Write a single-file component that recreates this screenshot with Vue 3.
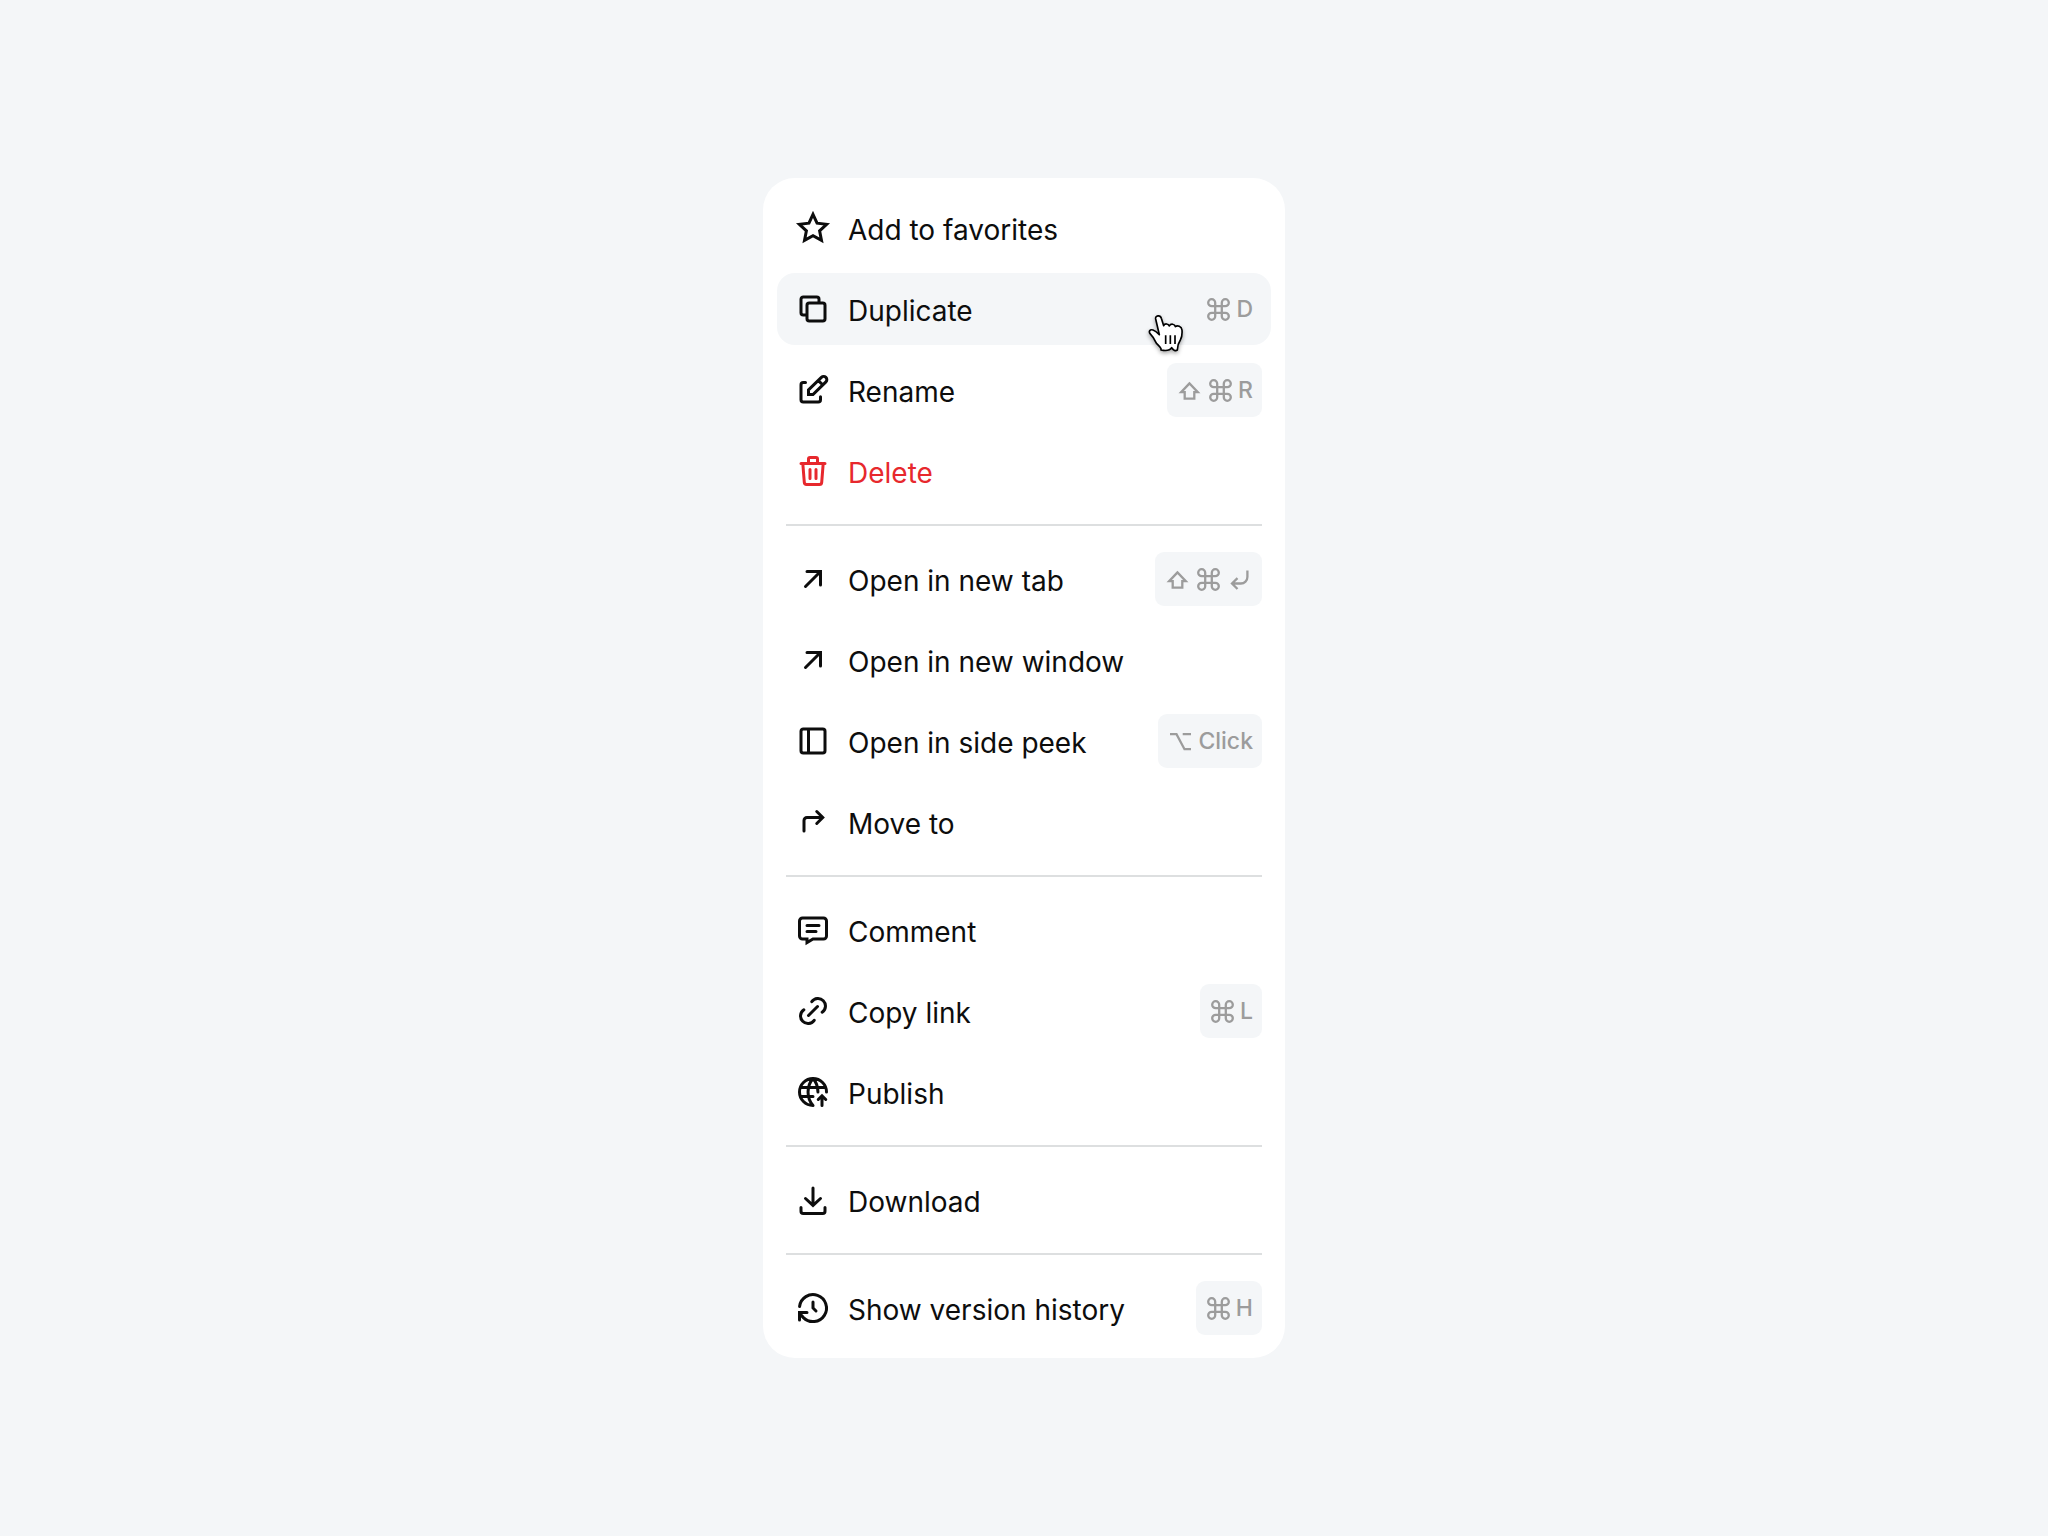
<template>
  <main class="page">
    <nav class="menu" aria-label="Page actions">
      <ul v-for="(group, index) in groups" :key="index" class="menu-group">
        <li v-for="item in group" :key="item.label" class="menu-row">
          <button
            type="button"
            class="menu-item"
            :class="{ danger: item.danger, active: item.label === activeItem }"
          >
            <svg class="item-icon" viewBox="0 0 24 24" aria-hidden="true">
              <path :d="icons[item.icon]" />
            </svg>
            <span class="item-label">{{ item.label }}</span>
            <kbd v-if="item.keys" class="shortcut">
              <template v-for="key in item.keys" :key="key">
                <svg v-if="keyIcons[key]" class="key-icon" viewBox="0 0 27 27" aria-hidden="true">
                  <path :d="keyIcons[key]" />
                </svg>
                <span v-else>{{ key }}</span>
              </template>
            </kbd>
          </button>

          <svg v-if="item.label === activeItem" class="pointer" viewBox="0 0 120 120" aria-hidden="true">
            <path
              class="hand"
              d="M26 15C24 4 40 2 43 13L50 35C53 28 64 28 67 36C71 28 83 29 85 38C91 33 104 37 105 48C106 62 105 70 100 78C94 87 91 94 91 108Q83 114 74 101Q67 113 42 108V104C37 95 29 91 25 82C21 73 17 67 11 61C3 53 9 45 18 48C26 51 31 56 37 62Z"
            />
            <path class="creases" d="M56 64V90M70 64V90M84 64V90" />
          </svg>
        </li>
      </ul>
    </nav>
  </main>
</template>

<script setup>
import { ref } from 'vue'

const activeItem = ref('Duplicate')

const groups = [
  [
    { label: 'Add to favorites', icon: 'star' },
    { label: 'Duplicate', icon: 'duplicate', keys: ['cmd', 'D'] },
    { label: 'Rename', icon: 'edit', keys: ['shift', 'cmd', 'R'] },
    { label: 'Delete', icon: 'trash', danger: true }
  ],
  [
    { label: 'Open in new tab', icon: 'arrow', keys: ['shift', 'cmd', 'enter'] },
    { label: 'Open in new window', icon: 'arrow' },
    { label: 'Open in side peek', icon: 'panel', keys: ['option', 'Click'] },
    { label: 'Move to', icon: 'move' }
  ],
  [
    { label: 'Comment', icon: 'comment' },
    { label: 'Copy link', icon: 'link', keys: ['cmd', 'L'] },
    { label: 'Publish', icon: 'publish' }
  ],
  [{ label: 'Download', icon: 'download' }],
  [{ label: 'Show version history', icon: 'history', keys: ['cmd', 'H'] }]
]

const icons = {
  star: 'M12 2.9L14.7 8.77L21.1 9.53L16.4 13.93L17.65 20.28L12 17.1L6.35 20.28L7.6 13.93L2.9 9.53L9.3 8.77Z',
  duplicate:
    'M9.5 8H18.5A1.5 1.5 0 0 1 20 9.5V18.5A1.5 1.5 0 0 1 18.5 20H9.5A1.5 1.5 0 0 1 8 18.5V9.5A1.5 1.5 0 0 1 9.5 8ZM8 16H5.5A1.5 1.5 0 0 1 4 14.5V5.5A1.5 1.5 0 0 1 5.5 4H14.5A1.5 1.5 0 0 1 16 5.5V8',
  edit: 'M7 7H5.5A1.5 1.5 0 0 0 4 8.5V18.5A1.5 1.5 0 0 0 5.5 20H15.5A1.5 1.5 0 0 0 17 18.5V16.5M9 15V12L17.6 3.6A2.1 2.1 0 0 1 20.6 6.6L12 15ZM15.6 5.8L18.4 8.5',
  trash:
    'M4 7H20M5.2 7L6.2 19.6A1.5 1.5 0 0 0 7.7 21H16.3A1.5 1.5 0 0 0 17.8 19.6L18.8 7M9 7V4A1 1 0 0 1 10 3H14A1 1 0 0 1 15 4V7M10 11V17M14 11V17',
  arrow: 'M7 17L17 7M8 7H17V16',
  panel:
    'M5.5 4H18.5A1.5 1.5 0 0 1 20 5.5V18.5A1.5 1.5 0 0 1 18.5 20H5.5A1.5 1.5 0 0 1 4 18.5V5.5A1.5 1.5 0 0 1 5.5 4ZM9 4V20',
  move: 'M6 18V11A2 2 0 0 1 8 9H18M14.5 5L18.5 9L14.5 13',
  comment:
    'M5 4H19A2 2 0 0 1 21 6V16A2 2 0 0 1 19 18H12L8 20.4V18H5A2 2 0 0 1 3 16V6A2 2 0 0 1 5 4ZM8 9H16M8 13H14',
  link: 'M11.2 5.8A5 5 0 1 1 18.1 12.8M12.8 18.2A5 5 0 1 1 5.9 11.2M9 15L15 9',
  publish:
    'M21 12A9 9 0 1 0 12 21M12 3C7.6 8 7.6 16 12 21M12 3C14.2 5.5 15.3 8.7 15.3 12M3.5 9H20.5M3.5 15H12M18 21V14.5M15.5 17L18 14.5L20.5 17',
  download:
    'M12 4V15M7 11L12 15.6L17 11M4 17V19.5A1.5 1.5 0 0 0 5.5 21H18.5A1.5 1.5 0 0 0 20 19.5V17',
  history: 'M3.05 11A9 9 0 1 1 5.6 18.4L3 15.5M3 20V15H8M12 8V12L14 14'
}

const keyIcons = {
  cmd: 'M10.2 10.2H6.7A3.5 3.5 0 1 1 10.2 6.7V20.3A3.5 3.5 0 1 1 6.7 16.8H20.3A3.5 3.5 0 1 1 16.8 20.3V6.7A3.5 3.5 0 1 1 20.3 10.2Z',
  shift: 'M13.5 6.4L5.2 15.2H8.7V21.6H18.3V15.2H21.8Z',
  enter: 'M21.4 4.5V11A6.5 6.5 0 0 1 14.9 17.5H6M11.5 12.2L6 17.5L11.5 23',
  option: 'M3 6.2H9.5L17.5 21.2H24M15.7 6.2H24'
}
</script>

<style>
body {
  margin: 0;
  background: #f4f6f8;
}
</style>

<style scoped>
.page {
  min-height: 100vh;
  display: flex;
  align-items: center;
  justify-content: center;
  font-family: Inter, 'Liberation Sans', sans-serif;
  color: #0d0d0d;
}

.menu {
  width: 100%;
  max-width: 522px;
  box-sizing: border-box;
  padding: 14px;
  background: #fff;
  border-radius: 32px;
}

.menu-group {
  display: flex;
  flex-direction: column;
  gap: 9px;
  margin: 0;
  padding: 0;
  list-style: none;
}

.menu-group + .menu-group::before {
  content: '';
  height: 2px;
  margin: 17px 9px 8px;
  background: #dddfe0;
}

.menu-row {
  position: relative;
}

.menu-item {
  display: flex;
  align-items: center;
  gap: 17px;
  width: 100%;
  height: 72px;
  padding: 0 9px 0 18px;
  border: none;
  border-radius: 18px;
  background: none;
  color: inherit;
  font: inherit;
  font-size: 28px;
  text-align: left;
  cursor: pointer;
}

.menu-item.active {
  background: #f4f6f8;
}

.menu-item.danger {
  color: #e7282d;
}

.item-icon {
  flex: none;
  width: 36px;
  height: 36px;
  fill: none;
  stroke: currentColor;
  stroke-width: 2;
  stroke-linecap: round;
}

.item-label {
  flex: 1;
  padding-top: 4px;
  white-space: nowrap;
}

.shortcut {
  display: flex;
  align-items: center;
  gap: 4px;
  height: 54px;
  padding: 0 9px;
  border-radius: 9px;
  background: #f4f6f8;
  color: #9c9c9c;
  font-family: inherit;
  font-size: 23px;
  font-weight: 500;
}

.key-icon {
  width: 27px;
  height: 27px;
  fill: none;
  stroke: currentColor;
  stroke-width: 2.3;
}

.pointer {
  position: absolute;
  top: 41px;
  right: 84px;
  width: 40px;
  height: 40px;
  overflow: visible;
  pointer-events: none;
  filter: drop-shadow(0 2px 2px rgba(0, 0, 0, 0.35));
}

.hand {
  fill: #fff;
  stroke: #000;
  stroke-width: 5;
  stroke-linejoin: round;
}

.creases {
  fill: none;
  stroke: #000;
  stroke-width: 5;
}
</style>
